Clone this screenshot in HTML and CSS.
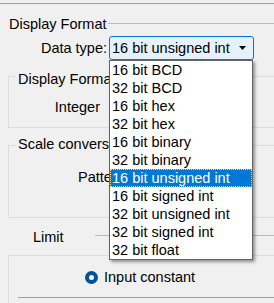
FILE: index.html
```html
<!DOCTYPE html>
<html>
<head>
<meta charset="utf-8">
<link rel="stylesheet" href="styles.css">
</head>
<body>
<div class="page">
  <div class="rule-top"></div>
  <div class="sec">
    <span>Display Format</span><i class="line"></i>
  </div>
  <div class="dt-row">
    <span class="dt-label">Data type:</span>
    <div class="combo">
      <span>16 bit unsigned int</span>
      <svg class="arrow" width="7" height="4" viewBox="0 0 7 4"><path d="M0 0H7L3.5 4Z" fill="#000"/></svg>
    </div>
  </div>
  <div class="group g1">
    <div class="gtitle">Display Format</div>
    <div class="row r-int"><span>Integer</span></div>
  </div>
  <div class="group g2">
    <div class="gtitle">Scale conversion</div>
    <div class="row r-pat"><span>Pattern</span></div>
  </div>
  <div class="limit">
    <span>Limit</span><i class="line"></i>
  </div>
  <div class="group g3">
    <div class="radio-row">
      <span class="radio"></span><span>Input constant</span>
    </div>
    <div class="field"></div>
  </div>
  <ul class="dropdown">
    <li>16 bit BCD</li>
    <li>32 bit BCD</li>
    <li>16 bit hex</li>
    <li>32 bit hex</li>
    <li>16 bit binary</li>
    <li>32 bit binary</li>
    <li class="sel">16 bit unsigned int</li>
    <li>16 bit signed int</li>
    <li>32 bit unsigned int</li>
    <li>32 bit signed int</li>
    <li>32 bit float</li>
  </ul>
</div>
</body>
</html>
```

FILE: styles.css
```css
html, body {
  margin: 0;
  padding: 0;
  background: #f0f0f0;
}
.page {
  position: relative;
  width: 274px;
  height: 303px;
  overflow: hidden;
  background: #f0f0f0;
  font: 14.5px/17px "Liberation Sans", Arial, sans-serif;
  color: #000;
}
.rule-top {
  margin-top: 3px;
  border-top: 1px solid #a0a0a0;
}
.sec {
  display: flex;
  margin-top: 12px;
  padding-left: 9px;
}
.sec .line {
  flex: 1;
  margin-top: 7px;
  margin-left: 1px;
  height: 0;
  border-top: 1px solid #b9b9b9;
}
.dt-row {
  display: flex;
  align-items: center;
  margin-top: 3px;
}
.dt-label {
  width: 107px;
  text-align: right;
}
.combo {
  margin-left: 2px;
  width: 145px;
  height: 24px;
  box-sizing: border-box;
  border: 1px solid #0078d7;
  border-radius: 3px;
  background: #e5f1fb;
  display: flex;
  align-items: center;
  justify-content: space-between;
  padding: 0 7px 0 2px;
}
.arrow {
  display: block;
}
.group {
  margin-left: 8px;
  border: 1px solid #dcdcdc;
  border-right: none;
}
.gtitle {
  width: max-content;
  white-space: nowrap;
  margin-left: 7px;
  padding: 0 2px;
  background: #f0f0f0;
}
.g1 {
  margin-top: 16px;
  height: 50px;
}
.g1 .gtitle {
  margin-top: -6px;
}
.r-int {
  margin-top: 11px;
  width: 91px;
  text-align: right;
}
.g2 {
  margin-top: 17px;
  height: 71px;
}
.g2 .gtitle {
  margin-top: -10px;
}
.r-pat {
  margin-top: 16px;
  padding-left: 69px;
}
.limit {
  display: flex;
  margin-top: 11px;
  padding-left: 33px;
}
.limit .line {
  flex: 1;
  margin-top: 6px;
  margin-left: 31px;
  height: 0;
  border-top: 1px solid #b9b9b9;
}
.g3 {
  margin-top: 9px;
  border-bottom: none;
  height: 60px;
}
.radio-row {
  display: flex;
  align-items: center;
  margin-top: 13px;
  padding-left: 76px;
}
.radio {
  width: 13px;
  height: 13px;
  box-sizing: border-box;
  border-radius: 50%;
  border: 4px solid #0050a0;
  background: #fff;
  margin-right: 6px;
}
.field {
  margin-top: 11px;
  margin-left: 9px;
  border-top: 1px solid #a0a0a0;
}
.dropdown {
  position: absolute;
  left: 109px;
  top: 60px;
  width: 144px;
  box-sizing: border-box;
  margin: 0;
  padding: 0;
  list-style: none;
  background: #fff;
  border: 1px solid #646464;
  box-shadow: 2px 2px 3px rgba(0, 0, 0, 0.4);
}
.dropdown li {
  height: 18px;
  line-height: 18px;
  padding-left: 2px;
  white-space: nowrap;
}
.dropdown li.sel {
  background: #0078d7;
  color: #fff;
  outline: 1px dotted #ffd27a;
  outline-offset: -1px;
}
```
